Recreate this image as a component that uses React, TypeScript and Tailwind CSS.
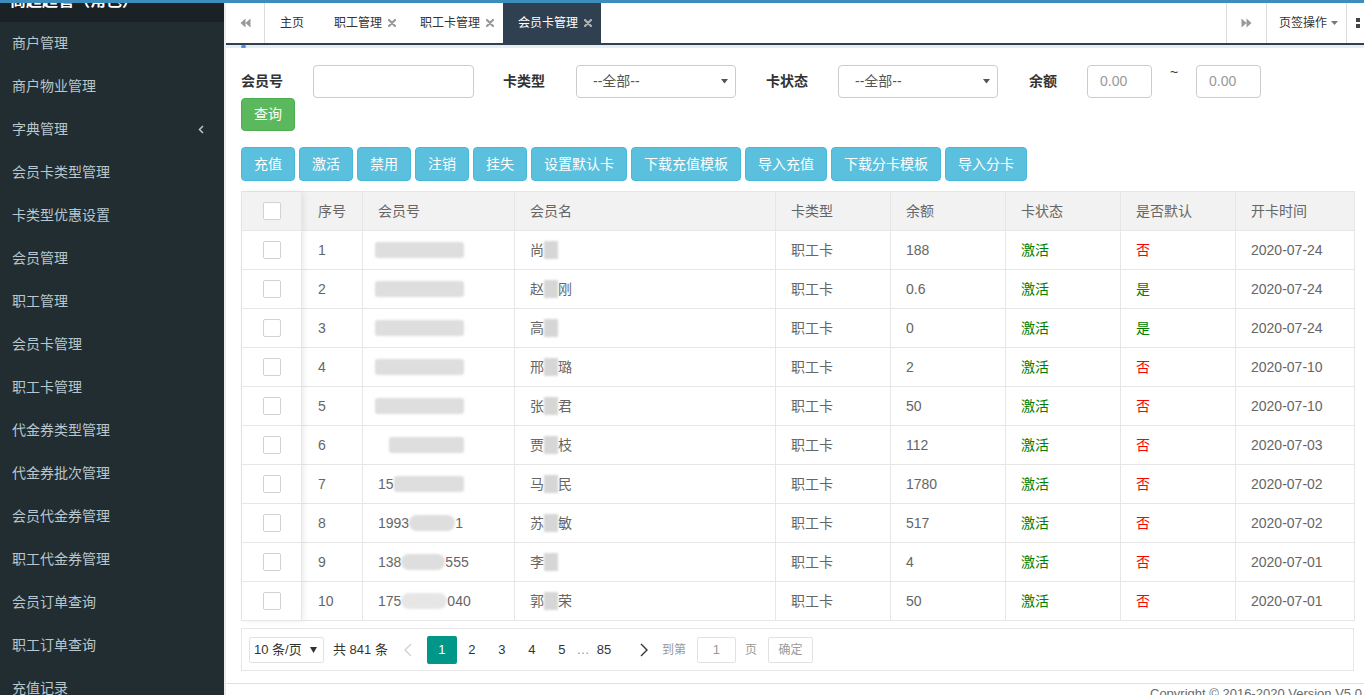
import React from "react";

const sideItems = [
  "商户管理",
  "商户物业管理",
  "字典管理",
  "会员卡类型管理",
  "卡类型优惠设置",
  "会员管理",
  "职工管理",
  "会员卡管理",
  "职工卡管理",
  "代金券类型管理",
  "代金券批次管理",
  "会员代金券管理",
  "职工代金券管理",
  "会员订单查询",
  "职工订单查询",
  "充值记录",
];

const actions = ["充值", "激活", "禁用", "注销", "挂失", "设置默认卡", "下载充值模板", "导入充值", "下载分卡模板", "导入分卡"];

const smudge = "inline-block h-[16px] bg-[#dedede] blur-[1px] align-middle rounded-[3px]";

const rows = [
  { no: 1, card: <span className={`${smudge} w-[89px] -ml-[3px]`} />, name: ["尚", ""], bal: "188", def: false, date: "2020-07-24" },
  { no: 2, card: <span className={`${smudge} w-[89px] -ml-[3px]`} />, name: ["赵", "刚"], bal: "0.6", def: true, date: "2020-07-24" },
  { no: 3, card: <span className={`${smudge} w-[89px] -ml-[3px]`} />, name: ["高", ""], bal: "0", def: true, date: "2020-07-24" },
  { no: 4, card: <span className={`${smudge} w-[89px] -ml-[3px]`} />, name: ["邢", "璐"], bal: "2", def: false, date: "2020-07-10" },
  { no: 5, card: <span className={`${smudge} w-[89px] -ml-[3px]`} />, name: ["张", "君"], bal: "50", def: false, date: "2020-07-10" },
  { no: 6, card: <span className={`${smudge} w-[75px] ml-[11px]`} />, name: ["贾", "枝"], bal: "112", def: false, date: "2020-07-03" },
  {
    no: 7,
    card: (
      <>
        15<span className={`${smudge} w-[70px]`} />
      </>
    ),
    name: ["马", "民"],
    bal: "1780",
    def: false,
    date: "2020-07-02",
  },
  {
    no: 8,
    card: (
      <>
        1993<span className={`${smudge} w-[46px] rounded-full`} />1
      </>
    ),
    name: ["苏", "敏"],
    bal: "517",
    def: false,
    date: "2020-07-02",
  },
  {
    no: 9,
    card: (
      <>
        138<span className={`${smudge} w-[44px] rounded-full`} />555
      </>
    ),
    name: ["李", ""],
    bal: "4",
    def: false,
    date: "2020-07-01",
  },
  {
    no: 10,
    card: (
      <>
        175<span className={`${smudge} w-[46px] rounded-full bg-[#e6e6e6]`} />040
      </>
    ),
    name: ["郭", "荣"],
    bal: "50",
    def: false,
    date: "2020-07-01",
  },
];

function Backward({ flip = false }: { flip?: boolean }) {
  return (
    <svg width="11" height="10" viewBox="0 0 11 10" className={flip ? "rotate-180" : ""}>
      <path d="M5.5 0.5 L0.5 5 L5.5 9.5Z M10.5 0.5 L5.5 5 L10.5 9.5Z" fill="#999" />
    </svg>
  );
}

function CloseX({ light = false }: { light?: boolean }) {
  return (
    <svg width="8" height="8" viewBox="0 0 8 8" className="ml-[6px]">
      <path d="M1 1 L7 7 M7 1 L1 7" stroke={light ? "#b0b0b0" : "#999"} strokeWidth="2.2" strokeLinecap="round" />
    </svg>
  );
}

function Checkbox() {
  return <span className="block w-[18px] h-[18px] border border-[#d2d2d2] rounded-[2px] bg-white" />;
}

function Caret() {
  return (
    <svg width="7" height="5" viewBox="0 0 7 5">
      <path d="M0 0 L7 0 L3.5 4.5Z" fill="#555" />
    </svg>
  );
}

export default function App() {
  return (
    <div className="w-[1364px] h-[695px] overflow-hidden flex flex-col font-['Liberation_Sans','Noto_Sans_CJK_SC',sans-serif] bg-white">
      <div className="h-[3px] shrink-0 bg-[#3c8dbc]" />
      <div className="flex flex-1 min-h-0">
        {/* sidebar */}
        <aside className="w-[224px] shrink-0 bg-[#222d32] overflow-hidden">
          <div className="h-[19px] bg-[#1b2226] overflow-hidden">
            <div className="-mt-[12px] pl-[10px] text-[16px] leading-[20px] font-bold text-white whitespace-nowrap">商超超管（角色）</div>
          </div>
          {sideItems.map((s) => (
            <div key={s} className="h-[43px] flex items-center justify-between pl-[12px] pr-[20px] text-[14px] text-[#b8c7ce]">
              <span>{s}</span>
              {s === "字典管理" && (
                <svg width="6" height="9" viewBox="0 0 6 9">
                  <path d="M5 1 L1.5 4.5 L5 8" stroke="#b8c7ce" strokeWidth="1.5" fill="none" />
                </svg>
              )}
            </div>
          ))}
        </aside>

        {/* main */}
        <main className="flex-1 min-w-0 flex flex-col bg-[#e9edf0] pl-[2px]">
          {/* tab bar */}
          <div className="h-[42px] shrink-0 flex bg-white border-b-2 border-[#2f4050] text-[12px] text-[#333] overflow-hidden">
            <div className="w-[39px] shrink-0 flex items-center justify-center border-r border-[#dcdcdc]">
              <Backward />
            </div>
            <div className="flex-1 min-w-0 flex">
              <div className="flex items-center px-[15px]">主页</div>
              <div className="flex items-center pl-[15px] pr-[9px]">
                职工管理
                <CloseX />
              </div>
              <div className="flex items-center pl-[15px] pr-[9px]">
                职工卡管理
                <CloseX />
              </div>
              <div className="flex items-center pl-[15px] pr-[9px] bg-[#2f4050] text-white">
                会员卡管理
                <CloseX light />
              </div>
            </div>
            <div className="w-[40px] shrink-0 flex items-center justify-center border-l border-[#dcdcdc]">
              <Backward flip />
            </div>
            <div className="w-[80px] shrink-0 flex items-center gap-[4px] pl-[12px] border-l border-[#dcdcdc]">
              页签操作
              <svg width="7" height="4" viewBox="0 0 7 4">
                <path d="M0 0 L7 0 L3.5 4Z" fill="#777" />
              </svg>
            </div>
            <div className="w-[18px] shrink-0 flex items-center pl-[9px] border-l border-[#dcdcdc] overflow-hidden">
              <svg width="12" height="12" viewBox="0 0 12 12" className="shrink-0">
                <rect x="0" y="1" width="4" height="4" fill="#444" />
                <rect x="0" y="7" width="4" height="4" fill="#444" />
              </svg>
            </div>
          </div>
          <div className="h-[3px] shrink-0 pl-[15px]">
            <div className="w-[5px] h-[3px] rounded-full bg-[#4a8ef0]" />
          </div>

          {/* content */}
          <div className="flex-1 min-h-0 bg-white pl-[15px] pr-[9px] pt-[17px]">
            <div className="flex items-center text-[14px]">
              <label className="w-[72px] font-bold text-[#333]">会员号</label>
              <input className="w-[161px] h-[33px] border border-[#ccc] rounded-[4px] px-[12px] outline-none" />
              <label className="w-[73px] ml-[29px] font-bold text-[#333]">卡类型</label>
              <div className="w-[160px] h-[33px] border border-[#ccc] rounded-[4px] flex items-center justify-between pl-[16px] pr-[7px] text-[#555]">
                --全部--
                <Caret />
              </div>
              <label className="w-[72px] ml-[30px] font-bold text-[#333]">卡状态</label>
              <div className="w-[160px] h-[33px] border border-[#ccc] rounded-[4px] flex items-center justify-between pl-[16px] pr-[7px] text-[#555]">
                --全部--
                <Caret />
              </div>
              <label className="w-[58px] ml-[31px] font-bold text-[#333]">余额</label>
              <div className="w-[65px] h-[33px] border border-[#ccc] rounded-[4px] flex items-center pl-[12px] text-[#999]">0.00</div>
              <span className="w-[44px] text-center self-start -mt-[3px] text-[#333]">~</span>
              <div className="w-[65px] h-[33px] border border-[#ccc] rounded-[4px] flex items-center pl-[12px] text-[#999]">0.00</div>
            </div>
            <button className="h-[33px] px-[12px] bg-[#5cb85c] border border-[#4cae4c] rounded-[4px] text-white text-[14px]">查询</button>

            <div className="mt-[16px] flex gap-[4px]">
              {actions.map((a) => (
                <button key={a} className="h-[34px] px-[12px] bg-[#5bc0de] border border-[#46b8da] rounded-[4px] text-white text-[14px]">
                  {a}
                </button>
              ))}
            </div>

            {/* table */}
            <div className="mt-[10px] w-[1114px] flex border-t border-l border-r border-[#e6e6e6] text-[14px] text-[#666]">
              <div className="w-[60px] shrink-0 relative z-10 bg-white border-r border-[#e6e6e6] shadow-[2px_0_6px_rgba(0,0,0,0.07)]">
                <div className="h-[39px] flex items-center justify-center bg-[#f2f2f2] border-b border-[#e6e6e6]">
                  <Checkbox />
                </div>
                {rows.map((r) => (
                  <div key={r.no} className="h-[39px] flex items-center justify-center border-b border-[#e6e6e6]">
                    <Checkbox />
                  </div>
                ))}
              </div>
              <div className="flex-1 min-w-0">
                <div className="h-[39px] flex bg-[#f2f2f2] border-b border-[#e6e6e6]">
                  <div className="w-[61px] flex items-center pl-[16px] border-r border-[#e6e6e6]">序号</div>
                  <div className="w-[152px] flex items-center pl-[15px] border-r border-[#e6e6e6]">会员号</div>
                  <div className="w-[261px] flex items-center pl-[15px] border-r border-[#e6e6e6]">会员名</div>
                  <div className="w-[115px] flex items-center pl-[15px] border-r border-[#e6e6e6]">卡类型</div>
                  <div className="w-[115px] flex items-center pl-[15px] border-r border-[#e6e6e6]">余额</div>
                  <div className="w-[115px] flex items-center pl-[15px] border-r border-[#e6e6e6]">卡状态</div>
                  <div className="w-[115px] flex items-center pl-[15px] border-r border-[#e6e6e6]">是否默认</div>
                  <div className="flex-1 flex items-center pl-[15px]">开卡时间</div>
                </div>
                {rows.map((r) => (
                  <div key={r.no} className="h-[39px] flex border-b border-[#e6e6e6]">
                    <div className="w-[61px] flex items-center pl-[16px] border-r border-[#e6e6e6]">{r.no}</div>
                    <div className="w-[152px] flex items-center pl-[15px] border-r border-[#e6e6e6] whitespace-nowrap">{r.card}</div>
                    <div className="w-[261px] flex items-center pl-[15px] border-r border-[#e6e6e6]">
                      {r.name[0]}
                      <span className="inline-block w-[14px] h-[18px] bg-[#d6d6d6] blur-[1px]" />
                      {r.name[1]}
                    </div>
                    <div className="w-[115px] flex items-center pl-[15px] border-r border-[#e6e6e6]">职工卡</div>
                    <div className="w-[115px] flex items-center pl-[15px] border-r border-[#e6e6e6]">{r.bal}</div>
                    <div className="w-[115px] flex items-center pl-[15px] border-r border-[#e6e6e6] text-[#008000]">激活</div>
                    <div className={`w-[115px] flex items-center pl-[15px] border-r border-[#e6e6e6] ${r.def ? "text-[#008000]" : "text-[#ff0000]"}`}>
                      {r.def ? "是" : "否"}
                    </div>
                    <div className="flex-1 flex items-center pl-[15px]">{r.date}</div>
                  </div>
                ))}
              </div>
            </div>

            {/* pagination */}
            <div className="mt-[7px] w-[1113px] h-[43px] border border-[#e6e6e6] flex items-center pl-[7px] text-[13px] text-[#333]">
              <div className="w-[75px] h-[26px] border border-[#e2e2e2] rounded-[2px] flex items-center justify-between pl-[4px] pr-[6px]">
                10 条/页
                <svg width="7" height="6" viewBox="0 0 7 6">
                  <path d="M0 0 L7 0 L3.5 6Z" fill="#333" />
                </svg>
              </div>
              <span className="ml-[9px]">共 841 条</span>
              <span className="ml-[5px] w-[30px] h-[28px] flex items-center justify-center">
                <svg width="8" height="14" viewBox="0 0 8 14">
                  <path d="M7 1 L1 7 L7 13" stroke="#d2d2d2" strokeWidth="1.4" fill="none" />
                </svg>
              </span>
              <span className="ml-[4px] w-[30px] h-[28px] flex items-center justify-center bg-[#009688] text-white rounded-[2px]">1</span>
              <span className="w-[30px] h-[28px] flex items-center justify-center">2</span>
              <span className="w-[30px] h-[28px] flex items-center justify-center">3</span>
              <span className="w-[30px] h-[28px] flex items-center justify-center">4</span>
              <span className="w-[30px] h-[28px] flex items-center justify-center">5</span>
              <span className="w-[12px] h-[28px] flex items-center justify-center text-[#999]">…</span>
              <span className="w-[30px] h-[28px] flex items-center justify-center">85</span>
              <span className="ml-[10px] w-[30px] h-[28px] flex items-center justify-center">
                <svg width="8" height="14" viewBox="0 0 8 14">
                  <path d="M1 1 L7 7 L1 13" stroke="#333" strokeWidth="1.4" fill="none" />
                </svg>
              </span>
              <span className="ml-[3px] text-[12px] text-[#999]">到第</span>
              <span className="ml-[11px] w-[39px] h-[26px] border border-[#e2e2e2] rounded-[2px] flex items-center justify-center text-[#999]">1</span>
              <span className="ml-[9px] text-[12px] text-[#999]">页</span>
              <span className="ml-[11px] w-[45px] h-[26px] border border-[#e2e2e2] rounded-[2px] flex items-center justify-center text-[12px] text-[#999]">确定</span>
            </div>
          </div>

          {/* footer */}
          <div className="h-[12px] shrink-0 bg-white border-t border-[#dcdfe3] overflow-hidden">
            <div className="pl-[924px] pt-[2px] text-[13px] leading-[16px] text-[#676a6c] whitespace-nowrap">Copyright © 2016-2020 Version V5.0</div>
          </div>
        </main>
      </div>
    </div>
  );
}
